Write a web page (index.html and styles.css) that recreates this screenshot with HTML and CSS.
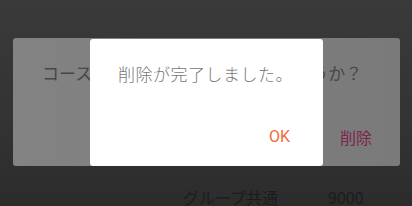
FILE: index.html
```html
<!DOCTYPE html>
<html lang="ja">
<head>
    <meta charset="UTF-8">
    <meta name="viewport" content="width=device-width, initial-scale=1.0">
    <title>コース削除</title>
    <link rel="stylesheet" href="styles.css">
</head>
<body>
    <div class="screen">
        <div class="confirm-dialog">
            <p class="confirm-message">コースを削除してもよろしいでしょうか？</p>
            <div class="dialog-actions">
                <span class="confirm-button">削除</span>
            </div>
        </div>

        <div class="list-row">
            <span class="row-name">グループ共通</span>
            <span class="row-price">9000</span>
        </div>

        <div class="done-dialog">
            <p class="done-message">削除が完了しました。</p>
            <div class="dialog-actions">
                <span class="ok-button">OK</span>
            </div>
        </div>
    </div>
</body>
</html>
```

FILE: styles.css
```css
* {
    margin: 0;
    padding: 0;
    box-sizing: border-box;
}

body {
    font-family: 'Noto Sans CJK JP', 'Noto Sans', sans-serif;
    background: linear-gradient(180deg, #3a3a3a 0%, #333 60%, #2c2c2c 100%);
    width: 412px;
    height: 206px;
    overflow: hidden;
}

.screen {
    position: relative;
    height: 206px;
    padding-top: 38px;
}

.confirm-dialog {
    margin: 0 12px 0 13px;
    height: 128px;
    border-radius: 3px;
    background: linear-gradient(90deg, #838383 0%, #7d7d7d 60%, #7a7a7a 100%);
    display: flex;
    flex-direction: column;
    justify-content: space-between;
    padding: 25px 28px 19px 29px;
}

.confirm-message {
    font-size: 17px;
    line-height: 20px;
    color: #474747;
    white-space: nowrap;
}

.dialog-actions {
    display: flex;
    justify-content: flex-end;
}

.confirm-button {
    font-size: 16px;
    line-height: 20px;
    color: #7b2548;
}

.list-row {
    display: flex;
    padding: 21px 0 0 183px;
    font-size: 16px;
    line-height: 20px;
    color: #1c1c1c;
}

.row-name {
    width: 145px;
}

.done-dialog {
    position: absolute;
    left: 90px;
    top: 39px;
    width: 233px;
    height: 127px;
    background: #fff;
    border-radius: 3px;
    display: flex;
    flex-direction: column;
    justify-content: space-between;
    padding: 24px 33px 19px 28px;
}

.done-message {
    font-size: 17px;
    line-height: 22px;
    color: #777;
    letter-spacing: 0.5px;
    font-weight: 300;
    white-space: nowrap;
}

.ok-button {
    font-family: Roboto, 'Noto Sans', sans-serif;
    font-size: 16px;
    line-height: 20px;
    color: #f26a35;
}
```
